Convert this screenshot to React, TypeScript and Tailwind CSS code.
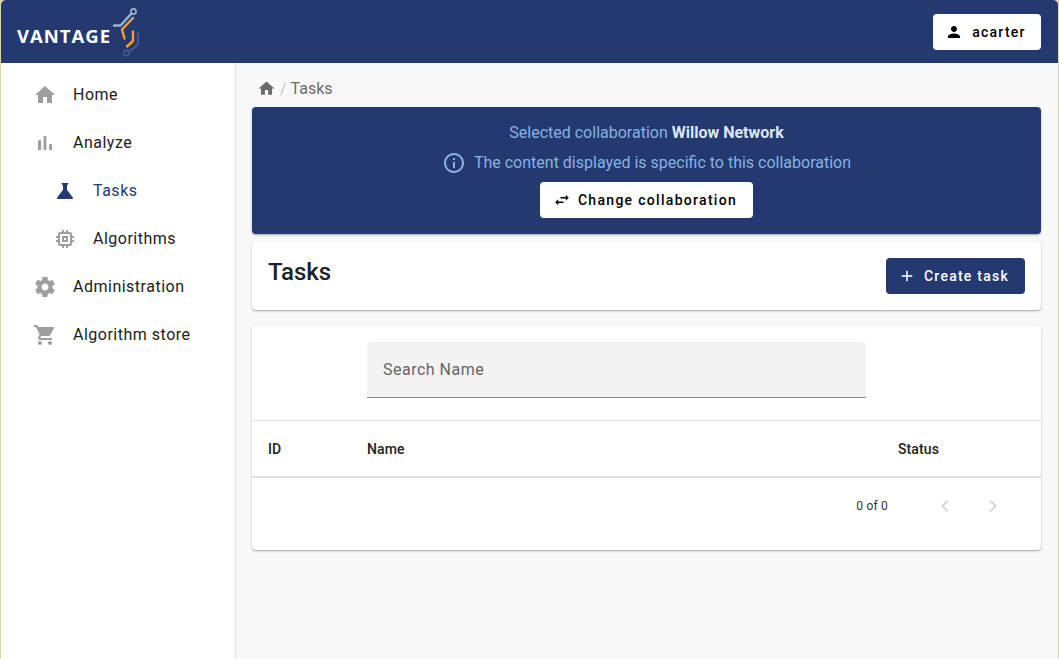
const ICONS = {
  home: "M10 20v-6h4v6h5v-8h3L12 3 2 12h3v8z",
  chart: "M5 9.2h3V19H5zM10.6 5h2.8v14h-2.8zm5.6 8H19v6h-2.8z",
  science:
    "M19.8 18.4 14 10.67V6.5l1.35-1.69c.26-.33.03-.81-.39-.81H9.04c-.42 0-.65.48-.39.81L10 6.5v4.17L4.2 18.4c-.49.66-.02 1.6.8 1.6h14c.82 0 1.29-.94.8-1.6z",
  memory:
    "M15 9H9v6h6V9zm-2 4h-2v-2h2v2zm8-2V9h-2V7c0-1.1-.9-2-2-2h-2V3h-2v2h-2V3H9v2H7c-1.1 0-2 .9-2 2v2H3v2h2v2H3v2h2v2c0 1.1.9 2 2 2h2v2h2v-2h2v2h2v-2h2c1.1 0 2-.9 2-2v-2h2v-2h-2v-2h2zm-4 6H7V7h10v10z",
  settings:
    "M19.43 12.98c.04-.32.07-.64.07-.98s-.03-.66-.07-.98l2.11-1.65c.19-.15.24-.42.12-.64l-2-3.46c-.12-.22-.39-.3-.61-.22l-2.49 1c-.52-.4-1.08-.73-1.69-.98l-.38-2.65C14.46 2.18 14.25 2 14 2h-4c-.25 0-.46.18-.49.42l-.38 2.65c-.61.25-1.17.59-1.69.98l-2.49-1c-.23-.09-.49 0-.61.22l-2 3.46c-.13.22-.07.49.12.64l2.11 1.65c-.04.32-.07.65-.07.98s.03.66.07.98l-2.11 1.65c-.19.15-.24.42-.12.64l2 3.46c.12.22.39.3.61.22l2.49-1c.52.4 1.08.73 1.69.98l.38 2.65c.03.24.24.42.49.42h4c.25 0 .46-.18.49-.42l.38-2.65c.61-.25 1.17-.59 1.69-.98l2.49 1c.23.09.49 0 .61-.22l2-3.46c.12-.22.07-.49-.12-.64l-2.11-1.65zM12 15.5c-1.93 0-3.5-1.57-3.5-3.5s1.57-3.5 3.5-3.5 3.5 1.57 3.5 3.5-1.57 3.5-3.5 3.5z",
  cart:
    "M7 18c-1.1 0-1.99.9-1.99 2S5.9 22 7 22s2-.9 2-2-.9-2-2-2zM1 2v2h2l3.6 7.59-1.35 2.45c-.16.28-.25.61-.25.96 0 1.1.9 2 2 2h12v-2H7.42c-.14 0-.25-.11-.25-.25l.03-.12.9-1.63h7.45c.75 0 1.41-.41 1.75-1.03l3.58-6.49c.08-.14.12-.31.12-.48 0-.55-.45-1-1-1H5.21l-.94-2H1zm16 16c-1.1 0-1.99.9-1.99 2s.89 2 1.99 2 2-.9 2-2-.9-2-2-2z",
  person:
    "M12 12c2.21 0 4-1.79 4-4s-1.79-4-4-4-4 1.79-4 4 1.79 4 4 4zm0 2c-2.67 0-8 1.34-8 4v2h16v-2c0-2.66-5.33-4-8-4z",
  info:
    "M11 7h2v2h-2zm0 4h2v6h-2zm1-9C6.48 2 2 6.48 2 12s4.48 10 10 10 10-4.48 10-10S17.52 2 12 2zm0 18c-4.41 0-8-3.59-8-8s3.59-8 8-8 8 3.59 8 8-3.59 8-8 8z",
  swap: "M6.99 11 3 15l3.99 4v-3H14v-2H6.99v-3zM21 9l-3.99-4v3H10v2h7.01v3L21 9z",
  add: "M19 13h-6v6h-2v-6H5v-2h6V5h2v6h6v2z",
  left: "M15.41 7.41 14 6l-6 6 6 6 1.41-1.41L10.83 12z",
  right: "M10 6 8.59 7.41 13.17 12l-4.58 4.59L10 18l6-6z",
};

function Icon({ name, className }: { name: keyof typeof ICONS; className: string }) {
  return (
    <svg viewBox="0 0 24 24" fill="currentColor" className={className}>
      <path d={ICONS[name]} />
    </svg>
  );
}

function Logo() {
  return (
    <svg viewBox="0 0 32 52" className="w-[32px] h-[52px] ml-[1px] -mt-[1px]" fill="none">
      <path d="M2 20.5h6.5L19 9" stroke="#9fb4cc" strokeWidth="2.4" strokeLinecap="round" strokeLinejoin="round" />
      <circle cx="21.5" cy="6.5" r="2.6" stroke="#9fb4cc" strokeWidth="1.6" />
      <path d="M21 13 L10 24.5 L12.5 33.5" stroke="#f5a02c" strokeWidth="2.4" strokeLinecap="round" strokeLinejoin="round" />
      <path d="M21 26.5 V36 L15 41.5" stroke="#f5a02c" strokeWidth="2.4" strokeLinecap="round" strokeLinejoin="round" />
      <path d="M26 28 V39.5 L17 47" stroke="#49598f" strokeWidth="2.2" strokeLinecap="round" strokeLinejoin="round" />
      <circle cx="14.5" cy="48" r="2.6" stroke="#49598f" strokeWidth="1.6" />
    </svg>
  );
}

const NAV = [
  { label: "Home", icon: "home", sub: false, active: false },
  { label: "Analyze", icon: "chart", sub: false, active: false },
  { label: "Tasks", icon: "science", sub: true, active: true },
  { label: "Algorithms", icon: "memory", sub: true, active: false },
  { label: "Administration", icon: "settings", sub: false, active: false },
  { label: "Algorithm store", icon: "cart", sub: false, active: false },
] as const;

export default function App() {
  return (
    <div className="w-[1059px] h-[659px] overflow-hidden bg-[#e0d3a4] px-px font-['Roboto',sans-serif]">
      <div className="h-full flex flex-col bg-[#f8f8f8] rounded-t-[5px] overflow-hidden">
        <header className="h-[63px] shrink-0 bg-[#23396f] flex items-center justify-between pl-[16px] pr-[17px]">
          <div className="flex items-center">
            <span className="font-['Open_Sans',sans-serif] text-white text-[18.5px] font-bold tracking-[1px] mt-[9px]">
              VANTAGE
            </span>
            <Logo />
          </div>
          <button className="h-9 w-[108px] bg-white rounded flex items-center justify-center gap-[9px] text-black text-sm font-medium tracking-[1.25px] pr-[3px]">
            <Icon name="person" className="w-[18px] h-[18px]" />
            acarter
          </button>
        </header>

        <div className="flex-1 flex min-h-0">
          <aside className="w-[235px] shrink-0 bg-white border-r border-[#e0e0e0] py-2">
            {NAV.map((item) => (
              <div
                key={item.label}
                className={`h-12 flex items-center gap-4 ${item.sub ? "pl-[52px]" : "pl-[32px]"}`}
              >
                <Icon
                  name={item.icon}
                  className={`w-6 h-6 -mt-px ${item.active ? "text-[#23396f]" : "text-[#9e9e9e]"}`}
                />
                <span
                  className={`text-base tracking-[0.5px] ${item.active ? "text-[#23396f]" : "text-[#212121]"}`}
                >
                  {item.label}
                </span>
              </div>
            ))}
          </aside>

          <main className="flex-1 min-w-0 pl-4 pr-[17px] pt-[15px]">
            <div className="h-[21px] flex items-center pl-[5px] text-[#6b6b6b] text-base">
              <Icon name="home" className="w-[19px] h-[19px]" />
              <span className="mx-1 text-[#c4c4c4]">/</span>
              <span>Tasks</span>
            </div>

            <section className="mt-2 h-[127px] bg-[#23396f] rounded flex flex-col items-center pt-4 text-[#86b3e3] text-base shadow-[0_1px_2px_rgba(0,0,0,0.35)]">
              <p className="h-5 leading-5">
                Selected collaboration <strong className="font-bold text-[#dce8f5]">Willow Network</strong>
              </p>
              <p className="h-5 mt-[10px] flex items-center gap-2 leading-5">
                <Icon name="info" className="w-6 h-6" />
                The content displayed is specific to this collaboration
              </p>
              <button className="mt-[9px] h-9 w-[213px] bg-white rounded flex items-center justify-center gap-[7px] text-black text-sm font-medium tracking-[1.3px] pr-[3px]">
                <Icon name="swap" className="w-[18px] h-[18px]" />
                Change collaboration
              </button>
            </section>

            <section className="mt-2 h-[68px] bg-white rounded flex items-start justify-between pl-4 pr-4 shadow-[0_1px_2px_rgba(0,0,0,0.35)]">
              <h1 className="mt-[14px] text-2xl leading-8 font-medium text-[#212121]">Tasks</h1>
              <button className="mt-4 h-9 w-[139px] bg-[#23396f] rounded flex items-center justify-center gap-2 text-white text-sm font-medium tracking-[1.25px] pr-1">
                <Icon name="add" className="w-[18px] h-[18px]" />
                Create task
              </button>
            </section>

            <section className="mt-4 h-[224px] bg-white rounded shadow-[0_1px_2px_rgba(0,0,0,0.35)]">
              <div className="h-[95px] border-b border-[#e0e0e0] pt-4 pl-[115px]">
                <div className="w-[499px] h-14 bg-[#f3f3f3] rounded-t border-b border-[#8a8a8a] flex items-center px-4 text-base tracking-[0.5px] text-[#666666]">
                  Search Name
                </div>
              </div>
              <div className="h-[57px] border-b-2 border-[#e0e0e0] flex items-center text-sm font-medium text-[#212121] tracking-[0.1px] pl-4">
                <span className="w-[99px]">ID</span>
                <span className="w-[531px]">Name</span>
                <span>Status</span>
              </div>
              <div className="h-[56px] flex items-center justify-end pr-[36px] text-xs tracking-[0.2px] text-[#333333]">
                <span className="mr-[45px]">0 of 0</span>
                <Icon name="left" className="w-6 h-6 text-[#d6d6d6]" />
                <Icon name="right" className="w-6 h-6 ml-6 text-[#d6d6d6]" />
              </div>
            </section>
          </main>
        </div>
      </div>
    </div>
  );
}
